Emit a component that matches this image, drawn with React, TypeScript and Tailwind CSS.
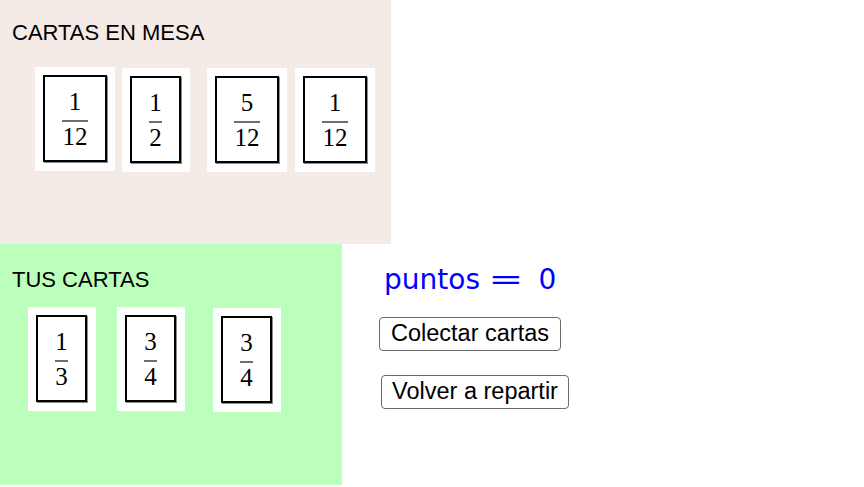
import React from "react";

type CardProps = {
  num: string;
  den: string;
  wide?: boolean;
  className?: string;
};

function Card({ num, den, wide, className }: CardProps) {
  return (
    <div
      className={`flex-none bg-white pt-[8px] pl-[8px] h-[104px] ${wide ? "w-[80px]" : "w-[68px]"} ${className ?? ""}`}
    >
      <div
        className={`flex items-center justify-center border-2 border-black bg-white shadow-[1px_1px_0_#8a8a8a] h-[87px] ${wide ? "w-[64px]" : "w-[51px]"}`}
      >
        <div className="inline-flex flex-col items-stretch font-['Liberation_Serif',serif] text-[25px] leading-none text-black">
          <span className="px-[0.5px] text-center">{num}</span>
          <span className="mt-[6px] h-[2px] bg-[#6e6e6e]" />
          <span className="mt-[2px] px-[0.5px] text-center">{den}</span>
        </div>
      </div>
    </div>
  );
}

export default function App() {
  return (
    <div className="h-[487px] w-[864px] overflow-hidden bg-white font-['Liberation_Sans',Arial,sans-serif] text-black">
      {/* mesa */}
      <div className="h-[244px] w-[391px] bg-[#f4ebe6] pt-[20px]">
        <h2 className="pl-[12px] text-[22px] leading-[25px]">CARTAS EN MESA</h2>
        <div className="mt-[22px] flex items-start">
          <Card num="1" den="12" wide className="ml-[35px]" />
          <Card num="1" den="2" className="ml-[7px] mt-[1px]" />
          <Card num="5" den="12" wide className="ml-[17px] mt-[1px]" />
          <Card num="1" den="12" wide className="ml-[8px] mt-[1px]" />
        </div>
      </div>

      <div className="flex">
        {/* mano */}
        <div className="h-[241px] w-[342px] flex-none bg-[#bbffbb] pt-[23px]">
          <h2 className="pl-[12px] text-[22px] leading-[25px]">TUS CARTAS</h2>
          <div className="mt-[15px] flex items-start">
            <Card num="1" den="3" className="ml-[28px]" />
            <Card num="3" den="4" className="ml-[21px]" />
            <Card num="3" den="4" className="ml-[28px] mt-[1px]" />
          </div>
        </div>

        {/* puntos y botones */}
        <div className="flex flex-col items-start pt-[20px]">
          <div className="ml-[42px] flex items-baseline font-['DejaVu_Sans',sans-serif] text-[28px] leading-[32px] text-[#0000ff]">
            <span>puntos</span>
            <span className="ml-[14px] inline-block scale-x-[1.5]">=</span>
            <span className="ml-[21px]">0</span>
          </div>
          <button className="ml-[37px] mt-[21px] flex h-[34px] w-[182px] items-center justify-center rounded-[4px] border border-[#6a6a6a] bg-white text-[23.5px] leading-none">
            Colectar cartas
          </button>
          <button className="ml-[39px] mt-[24px] flex h-[34px] w-[188px] items-center justify-center rounded-[4px] border border-[#6a6a6a] bg-white text-[23.5px] leading-none">
            Volver a repartir
          </button>
        </div>
      </div>
    </div>
  );
}
